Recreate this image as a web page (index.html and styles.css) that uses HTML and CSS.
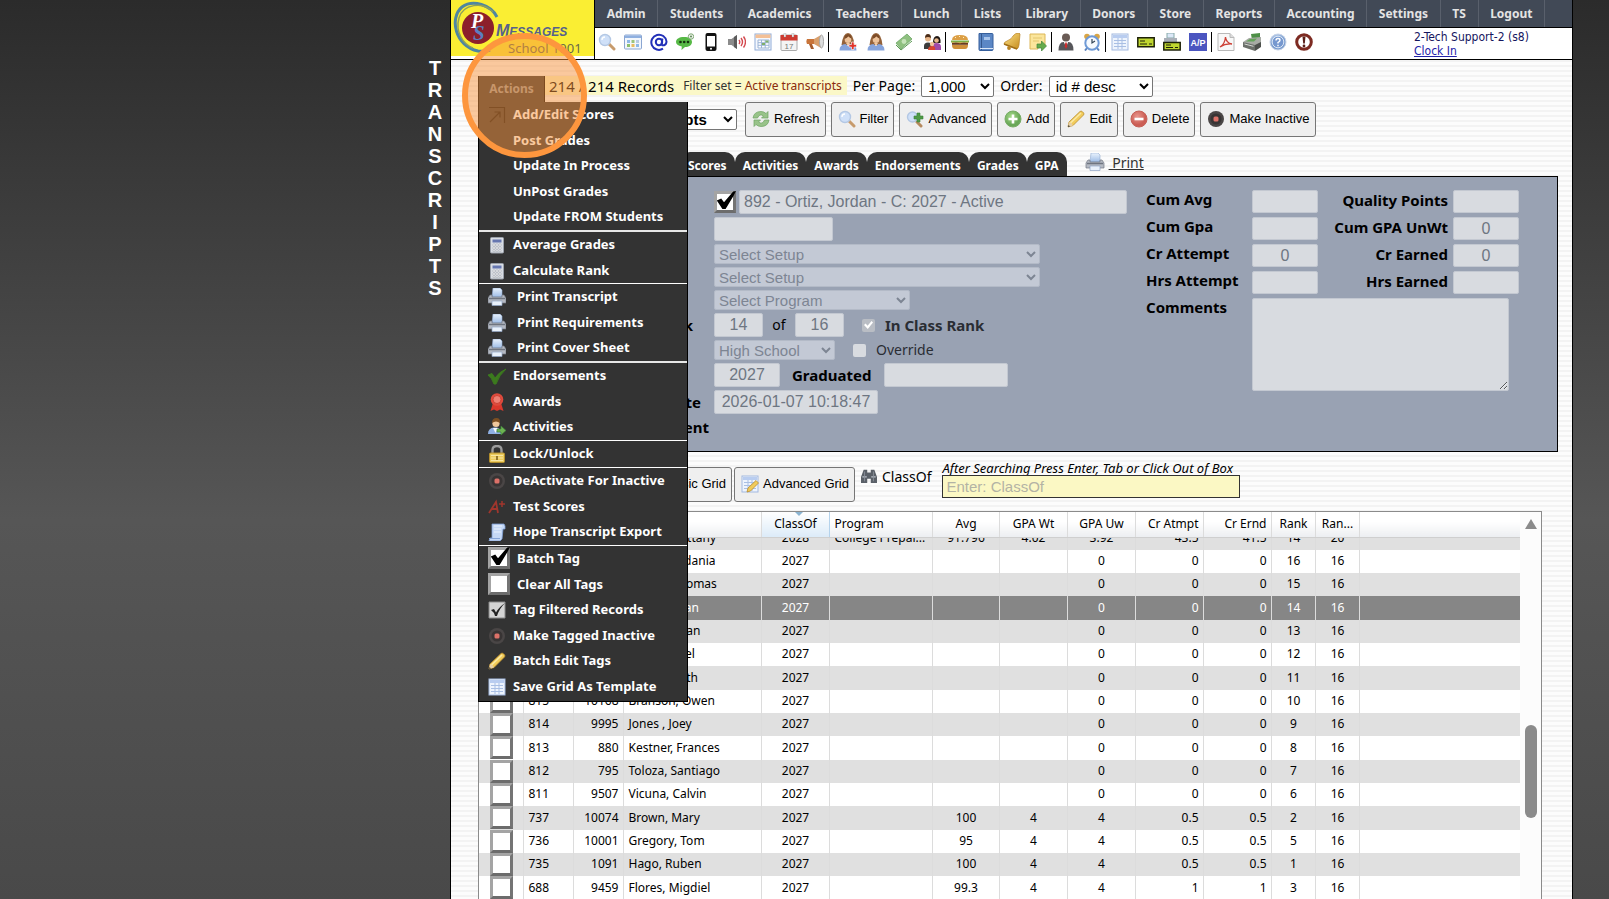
FILE: index.html
```html
<!DOCTYPE html>
<html lang="en">
<head>
<meta charset="utf-8">
<title>Transcripts</title>
<link rel="stylesheet" href="styles.css">
</head>
<body>
<svg class="sprite" aria-hidden="true">
  <defs>
    <linearGradient id="gBlue" x1="0" y1="0" x2="0" y2="1"><stop offset="0" stop-color="#eaf3fd"/><stop offset="1" stop-color="#9dbce6"/></linearGradient>
    <linearGradient id="gGold" x1="0" y1="0" x2="1" y2="1"><stop offset="0" stop-color="#ffe58a"/><stop offset="1" stop-color="#c48a1c"/></linearGradient>
    <radialGradient id="gRed" cx=".4" cy=".35"><stop offset="0" stop-color="#e9968d"/><stop offset="1" stop-color="#cb5d54"/></radialGradient>
    <radialGradient id="gGreen" cx=".4" cy=".35"><stop offset="0" stop-color="#a8dc8c"/><stop offset="1" stop-color="#6aa858"/></radialGradient>
    <radialGradient id="gHelp" cx=".4" cy=".3"><stop offset="0" stop-color="#c4d8f2"/><stop offset="1" stop-color="#7d9fd0"/></radialGradient>
    <symbol id="search" viewBox="0 0 18 18"><path d="M11 11l5 5" stroke="#c79b6c" stroke-width="3" stroke-linecap="round"/><circle cx="7" cy="7" r="5.5" fill="#cfe0f8" stroke="#b4c8e4" stroke-width="1.4"/><path d="M4 7a3 3 0 0 1 3-3" stroke="#fff" stroke-width="1.3" fill="none"/></symbol>
    <symbol id="searchplus" viewBox="0 0 18 18"><path d="M11 12l4 4" stroke="#b58a5f" stroke-width="3" stroke-linecap="round"/><circle cx="6.5" cy="7" r="5" fill="#cfe0f8" stroke="#b4c8e4" stroke-width="1.4"/><path d="M11 3h3v3h3v3h-3v3h-3V9H8V6h3z" fill="#4e9a45" stroke="#39803a" stroke-width=".6"/></symbol>
    <symbol id="table" viewBox="0 0 18 18"><rect x=".5" y="2" width="17" height="14" rx="1" fill="#f3f7fc" stroke="#8ba6d2"/><path d="M1 2.500h16v2.500H1z" fill="#8fb0e0"/><path d="M3 7h3v3H3zM12 11h3v3h-3z" fill="#8fb9e8"/><path d="M7.500 7h3v3h-3z" fill="#9cc47d"/><path d="M12 7h3v3h-3z" fill="#b8cbe4"/><path d="M3 11h3v3H3z" fill="#8cbf6d"/><path d="M7.500 11h3v3h-3z" fill="#e9bd5f"/></symbol>
    <symbol id="at" viewBox="0 0 18 18"><circle cx="9" cy="9" r="3.200" fill="none" stroke="#2230b8" stroke-width="2"/><path d="M12.400 5.500l-.8 5.500c0 2.500 4.900 1.500 4.900-2.500A7.600 7.600 0 1 0 13 15.700" fill="none" stroke="#2230b8" stroke-width="2"/></symbol>
    <symbol id="chat" viewBox="0 0 18 18"><path d="M8 4c5 0 8 2 8 5s-3 5-7 5l-3.500 3 .3-3.500C2 13 0 11 0 9c0-3 3-5 8-5z" fill="#57b946"/><circle cx="4.500" cy="9" r="1.300" fill="#15320f"/><circle cx="8.200" cy="9" r="1.300" fill="#15320f"/><circle cx="12" cy="9" r="1.300" fill="#15320f"/><circle cx="15" cy="3.500" r="2.700" fill="#eef3ec" stroke="#7da873"/><circle cx="15" cy="3.500" r="1" fill="#5b8753"/></symbol>
    <symbol id="phone" viewBox="0 0 18 18"><rect x="3.500" y="0" width="11" height="18" rx="2" fill="#111"/><rect x="5" y="3" width="8" height="10.500" fill="#fff"/><circle cx="9" cy="15.800" r="1" fill="#fff"/></symbol>
    <symbol id="sound" viewBox="0 0 18 18"><path d="M0 6h3.500L9 2v14l-5.500-4H0z" fill="#8b8b8b"/><path d="M6 4l3-2v14l-3-2z" fill="#5c5c5c"/><path d="M11 7q1.500 2 0 4M13 5q3 4 0 8M15.500 3.500q4 5.500 0 11" stroke="#d3494f" stroke-width="1.400" fill="none"/></symbol>
    <symbol id="sheet" viewBox="0 0 18 18"><rect x="1" y="1" width="16" height="16" fill="#f5f8fd" stroke="#8facd8"/><path d="M1.500 1.500h15V5h-15z" fill="#f4c096"/><path d="M4 7h11v8H4z" fill="#fff" stroke="#9cb4d6"/><path d="M4 9.700h11M4 12.300h11M7.500 7v8M11.200 7v8" stroke="#9cb4d6"/><path d="M8 10h3v2H8zM11.500 7.500h3v2h-3z" fill="#7fb069"/></symbol>
    <symbol id="calendar" viewBox="0 0 18 18"><rect x="1" y="2" width="16" height="15.500" rx="1" fill="#f4f4f4" stroke="#aaa"/><path d="M.5 2h17v5.500H.5z" fill="#cf3a30"/><path d="M4 0h1.800v4H4zM12 0h1.800v4H12z" fill="#fff" stroke="#888" stroke-width=".4"/><text x="9" y="15.500" font-size="8" font-family="Liberation Sans" text-anchor="middle" fill="#777">17</text></symbol>
    <symbol id="horn" viewBox="0 0 18 18"><path d="M1 6h7v5H1q-1.200-2.500 0-5z" fill="#c8743a"/><path d="M8 6l7-4v13l-7-4z" fill="#d9a06d"/><ellipse cx="15.500" cy="8.500" rx="2" ry="6.500" fill="#ddd" stroke="#a8a8a8"/><path d="M3 11h3l2 5H5z" fill="#a75c2c"/></symbol>
    <symbol id="woman" viewBox="0 0 18 18"><path d="M2.500 12Q4 0 9 0t6.500 12z" fill="#94623a"/><circle cx="9" cy="6.800" r="3.300" fill="#eec39a"/><path d="M5.500 6q3-1 4-3 1 2 3 2.500L12 2.500 9 1 6 2.500z" fill="#7d4c27"/><path d="M.5 17.500q0-6 6-6.500l2.500 2 2.500-2q6 .5 6 6.500z" fill="#86a4dc"/><path d="M7 10h4l-2 3z" fill="#f2c9a0"/></symbol>
    <symbol id="womanplus" viewBox="0 0 18 18"><use href="#woman"/><path d="M12.500 9h2.500v2.500h2.500V14H15v2.500h-2.500V14H10v-2.500h2.500z" fill="#e0342b" stroke="#fff" stroke-width=".6"/></symbol>
    <symbol id="cash" viewBox="0 0 18 18"><path d="M1 10L12 1l5 5L6 16z" fill="#8fc080" stroke="#62a05b" stroke-width=".7"/><path d="M1 12l5 5 11-9" fill="none" stroke="#5b9953"/><circle cx="9" cy="8.500" r="2.400" fill="#c6e3ba"/></symbol>
    <symbol id="people" viewBox="0 0 18 18"><path d="M1 13q0-3.500 4-3.500t4 3.500v3H1z" fill="#3c3c3c"/><path d="M9 14q0-4 4.500-4t4.500 4v3H9z" fill="#a04aa8"/><circle cx="5" cy="5.500" r="3" fill="#e7b68a"/><path d="M2 5q0-4 3-4t3 4q-3-2-6 0z" fill="#4b2d17"/><path d="M10 10q0-7 4-7t3.500 7z" fill="#1f1713"/><circle cx="13.500" cy="7.500" r="2.300" fill="#e7b68a"/><path d="M5 17q0-4 4-4t3 4z" fill="#d9452f"/><circle cx="9" cy="11" r="2.200" fill="#f0c69d"/></symbol>
    <symbol id="burger" viewBox="0 0 18 18"><path d="M1 7q0-5 8-5t8 5z" fill="#dc9f45"/><path d="M0 7.500h18v2H0z" fill="#7cae45"/><path d="M1 9.500h16v2.300H1z" fill="#6b3a1c"/><path d="M1 8.800l8 1.500 8-1.500v.8H1z" fill="#f4cf4b"/><path d="M1 12h16q0 4-3 4H4q-3 0-3-4z" fill="#cf8f39"/><path d="M4 4.500h1M8 3.500h1M12 4.500h1" stroke="#fff0c4"/></symbol>
    <symbol id="book" viewBox="0 0 18 18"><path d="M2 .5h13q1 0 1 1v15q0 1-1 1H3q-1 0-1-1z" fill="#5b87c5" stroke="#365f9c"/><path d="M4.500 1v16" stroke="#34588e"/><path d="M7 4h6v3H7z" fill="#a8c5ec"/><path d="M3 15.500h13" stroke="#dbe7f7"/></symbol>
    <symbol id="bell" viewBox="0 0 18 18"><path d="M16 0l1 1-1 11q-.5 3-2 4L1 11q0-2 3-3 5-2 6-5 2-3 6-3z" fill="url(#gGold)" stroke="#b8801f" stroke-width=".7"/><path d="M1 11l13 5" stroke="#a26f17" stroke-width="1.500"/><circle cx="6" cy="15" r="1.900" fill="#b98322"/></symbol>
    <symbol id="noteout" viewBox="0 0 18 18"><path d="M1 1h15v11H9v4H1z" fill="#fbe59b" stroke="#dcb758"/><path d="M4 5h9M4 8h6" stroke="#e3c66e"/><path d="M8 11h4.500V8l5 5-5 5v-3H8z" fill="#66ab4c" stroke="#40843a" stroke-width=".7"/></symbol>
    <symbol id="suit" viewBox="0 0 18 18"><circle cx="9" cy="4.500" r="4" fill="#6a5b55"/><path d="M1.500 17.500q0-8.500 5-8.500h5q5 0 5 8.500z" fill="#56565a"/><path d="M6.800 9h4.400L9 14z" fill="#fff"/><path d="M8.300 9.500h1.400l.6 4L9 16l-1.300-2.500z" fill="#cc2d2d"/></symbol>
    <symbol id="alarm" viewBox="0 0 18 18"><circle cx="4" cy="3.500" r="2.800" fill="#d9a545"/><circle cx="14" cy="3.500" r="2.800" fill="#d9a545"/><path d="M4 15l-2 2.500M14 15l2 2.500" stroke="#5b82bd" stroke-width="2"/><circle cx="9" cy="10" r="6.700" fill="#f6fafe" stroke="#6f9ad6" stroke-width="2"/><path d="M9 6v4l3-2" stroke="#345" fill="none" stroke-width="1.200"/></symbol>
    <symbol id="grid" viewBox="0 0 18 18"><rect x="1" y="1" width="16" height="16" fill="#eef4fd" stroke="#a3b9e0"/><path d="M2 2h14v3H2z" fill="#b9cdf0"/><path d="M3 7.500h12M3 10.500h12M3 13.500h12M7 5v11M11 5v11" stroke="#a9bfe4"/></symbol>
    <symbol id="check" viewBox="0 0 18 18"><path d="M.8 4.800h16.400v9H.8z" fill="#bfd630" stroke="#1d2108" stroke-width="1.500"/><path d="M3 8h5M3 11h7M12 11h3" stroke="#1d2108"/></symbol>
    <symbol id="printcheck" viewBox="0 0 18 18"><path d="M4 0h7v5H4z" fill="#dce8f8" stroke="#8aa"/><path d="M1 5h13v5H1z" fill="#a9afb8"/><path d="M.8 9.500h16.400v7.500H.8z" fill="#bfd630" stroke="#1d2108" stroke-width="1.500"/><path d="M3 12h5M3 14.500h7M12 14.500h3" stroke="#1d2108"/></symbol>
    <symbol id="ap" viewBox="0 0 18 18"><path d="M0 0h18v18H0z" fill="#4b55c0"/><text x="9" y="12.500" font-size="9" font-weight="bold" font-family="Liberation Sans" text-anchor="middle" fill="#fff">A/P</text></symbol>
    <symbol id="pdf" viewBox="0 0 18 18"><path d="M1 .5h12l4 4v13H1z" fill="#f8f8f8" stroke="#b9b9b9"/><path d="M13 .5v4h4" fill="#ddd" stroke="#b9b9b9"/><path d="M3 14q5-3 5.500-10 .5 6 6.500 7-7-.5-12 3z" fill="none" stroke="#cc4036" stroke-width="1.300"/></symbol>
    <symbol id="register" viewBox="0 0 18 18"><path d="M8 1l9-1v5l-8 2z" fill="#4d8f47"/><path d="M0 9l6-4 12-1v7l-6 3z" fill="#a7aba4"/><path d="M3 8.500l4-2.500 7-.5-3 3z" fill="#64a35a"/><path d="M0 9l12 3v6L0 14z" fill="#6c706b"/><path d="M12 12l6-3v5l-6 4z" fill="#4d504c"/><path d="M1.500 11l9 2.300" stroke="#d5d8d3"/></symbol>
    <symbol id="help" viewBox="0 0 18 18"><circle cx="9" cy="9" r="8" fill="url(#gHelp)" stroke="#c8d4e8"/><circle cx="9" cy="9" r="5.800" fill="#7698cf" stroke="#dbe6f5"/><path d="M7 7.500q0-2 2-2t2 1.700q0 1-2 2.300v1M9 11.800v1.500" stroke="#fff" stroke-width="1.400" fill="none"/></symbol>
    <symbol id="alert" viewBox="0 0 18 18"><circle cx="9" cy="9" r="7.300" fill="#fff" stroke="#7d2b22" stroke-width="3"/><path d="M7.500 3.500h3L9.800 10.500H8.200z" fill="#5b2019"/><circle cx="9" cy="13" r="1.400" fill="#5b2019"/></symbol>
    <symbol id="refresh" viewBox="0 0 18 18"><path d="M1 8q1-6.500 8-6.500 3 0 5 2l2-2v6.500h-6.500l2-2q-4-3-6 2z" fill="#98c389" stroke="#6da362" stroke-width=".7"/><path d="M17 10q-1 6.500-8 6.500-3 0-5-2l-2 2V10h6.500l-2 2q4 3 6-2z" fill="#98c389" stroke="#6da362" stroke-width=".7"/></symbol>
    <symbol id="add" viewBox="0 0 18 18"><circle cx="9" cy="9" r="8" fill="url(#gGreen)" stroke="#78ac66"/><path d="M7.700 4.500h2.600v3.200h3.200v2.600h-3.200v3.200H7.700v-3.200H4.500V7.700h3.200z" fill="#fff"/></symbol>
    <symbol id="delete" viewBox="0 0 18 18"><circle cx="9" cy="9" r="8" fill="url(#gRed)" stroke="#c66057"/><path d="M4.500 7.700h9v2.600h-9z" fill="#fff"/></symbol>
    <symbol id="pencil" viewBox="0 0 18 18"><path d="M1 17l1-5L13 1.500q1-1 2.500.3l1 1q1 1.200 0 2.200L6 15.500z" fill="#f1cb5a" stroke="#b98d2d" stroke-width=".8"/><path d="M3.500 13L14 3" stroke="#fae9a5" stroke-width="1.600"/><path d="M1 17l1-5q3 .5 4 3.500z" fill="#e6cfa7"/><path d="M1 17l.5-2 1.500 1.500z" fill="#333"/></symbol>
    <symbol id="dot" viewBox="0 0 18 18"><circle cx="9" cy="9" r="8" fill="#4a4646"/><circle cx="9" cy="9" r="5.500" fill="#383434"/><rect x="6.500" y="6.500" width="5" height="5" rx="1.500" fill="#dc7168"/></symbol>
    <symbol id="printer" viewBox="0 0 18 18"><path d="M5 0h7l2 2v7H4z" fill="url(#gBlue)" stroke="#92abd2" stroke-width=".6"/><path d="M2 7h2v2h10V7h2l2 3v5H0v-5z" fill="#b4b9c2" stroke="#737984" stroke-width=".7"/><path d="M1 10.500h16" stroke="#6f7580" stroke-width="1.500"/><path d="M4 13h10v4.500H4z" fill="#e9f1fb" stroke="#8fa3c4" stroke-width=".7"/></symbol>
    <symbol id="calc" viewBox="0 0 18 18"><rect x="2.500" y="1.500" width="13" height="15.500" rx="1" fill="#d9dde3" stroke="#9aa0aa"/><path d="M4.500 3.500h9v3h-9z" fill="#6677b0"/><path d="M5 8h2v2H5zM8 8h2v2H8zM11 8h2v2h-2zM5 11h2v2H5zM8 11h2v2H8zM11 11h2v2h-2zM5 14h2v1.500H5zM8 14h2v1.500H8zM11 14h2v1.500h-2z" fill="#fff" stroke="#8a909b" stroke-width=".4"/></symbol>
    <symbol id="arrow" viewBox="0 0 18 18"><path d="M1 1.500h15.500V17M2 16L12 6M6.500 6H12v5.500" fill="none" stroke="#0c0c0c" stroke-width="1.200"/></symbol>
    <symbol id="tick" viewBox="0 0 18 18"><path d="M0 8l4-1.500L7 11q4-6 11-9Q11 8 8 17H6Q4 11 0 8z" fill="#3c7a1e" stroke="#3c7a1e"/></symbol>
    <symbol id="award" viewBox="0 0 18 18"><path d="M5 10L2.500 18 6 16.500 9 18l3-1.500 3.500 1.500L13 10z" fill="#d9382c"/><circle cx="9" cy="6.500" r="6.300" fill="#e04a3c"/><circle cx="9" cy="6.500" r="4" fill="#ee8074" stroke="#c5382c" stroke-width=".8"/></symbol>
    <symbol id="person" viewBox="0 0 18 18"><path d="M0 16q0-6 6-6.500h3q4 1 4 6.500z" fill="#8fb0e4"/><path d="M5 10l2.500 5L10 10z" fill="#f4f7fb"/><circle cx="8" cy="5.500" r="3.600" fill="#efc79c"/><path d="M4 5q0-5 4.500-5 4 0 3.500 5-4-3-8 0z" fill="#7c4f22"/><path d="M9 11h4V8l5 4.500-5 4.500v-3H9z" fill="#6cb352" stroke="#3f833a" stroke-width=".7"/></symbol>
    <symbol id="lock" viewBox="0 0 18 18"><path d="M4.500 9V5q0-4 4.500-4t4.500 4v4" fill="none" stroke="#9b9b9b" stroke-width="2.400"/><rect x="1.500" y="8" width="15" height="9.500" rx="1" fill="#eccb5c" stroke="#b28d2c"/><path d="M3 10.500h12M3 13h12M3 15.500h12" stroke="#f8e6a4"/><path d="M8.200 11h1.600v4H8.200z" fill="#7c601a"/></symbol>
    <symbol id="grade" viewBox="0 0 18 18"><path d="M1 15L8 4l2 11M4 11h6" fill="none" stroke="#a0362d" stroke-width="1.800"/><path d="M14 3v6M11 6h6" stroke="#a0362d" stroke-width="1.500"/></symbol>
    <symbol id="scroll" viewBox="0 0 18 18"><path d="M4 1h12l1 2v3h-2l-1 10-2 2H1l1-3h2z" fill="#c5d8f5" stroke="#7f9fd4" stroke-width=".8"/><path d="M6 3h8M6 6h7M6 9h7" stroke="#eaf2fd"/><path d="M1 15.500h11" stroke="#86a5d8"/></symbol>
    <symbol id="graytick" viewBox="0 0 18 18"><path d="M1 1h16v16H1z" fill="#d4d4d4" stroke="#8b8b8b"/><path d="M3 9l3-1 2 3.500Q11 6 17 2q-6 6-8 13H7Q6 11 3 9z" fill="#222"/></symbol>
    <symbol id="gridedit" viewBox="0 0 18 18"><use href="#grid"/><path d="M6 17l1-4 8-7.500 2.500 2.500L9.500 16z" fill="#f1cb5a" stroke="#b98d2d" stroke-width=".8"/></symbol>
    <symbol id="binoculars" viewBox="0 0 18 18"><path d="M3 2h4v3h4V2h4l3 8v7h-7v-5H7v5H0v-7z" fill="#5a6068"/><path d="M1.500 10h5M11.500 10h5" stroke="#b9bfc8" stroke-width="1.500"/><path d="M4 4v11M14 4v11" stroke="#8b929c"/></symbol>
  </defs>
</svg>

<div class="page">
  <aside class="rail" aria-label="Transcripts">
    <span>T</span><span>R</span><span>A</span><span>N</span><span>S</span><span>C</span><span>R</span><span>I</span><span>P</span><span>T</span><span>S</span>
  </aside>

  <main class="app">
    <header class="top">
      <svg class="logo" viewBox="0 0 143 56">
        <path d="M46 17C40 5 22-1 11 7-2 18 4 46 27 51q7 1 12-1" fill="none" stroke="#4f86a0" stroke-width="3"/>
        <path d="M42 12C32 1 12 4 8 18 4 32 12 44 22 48" fill="none" stroke="#8fa05a" stroke-width="1.500"/>
        <circle cx="27" cy="28" r="16" fill="#8c1f2b"/>
        <text x="20" y="28" class="logo-p">P</text>
        <text x="22" y="40" class="logo-s">S</text>
        <text x="45" y="36" class="logo-name">M<tspan class="logo-rest">ESSAGES</tspan></text>
        <text x="57" y="53" class="logo-school">School 1001</text>
      </svg>
      <div class="bars">
        <nav class="nav">
          <a href="#">Admin</a><a href="#">Students</a><a href="#">Academics</a><a href="#">Teachers</a><a href="#">Lunch</a><a href="#">Lists</a><a href="#">Library</a><a href="#">Donors</a><a href="#">Store</a><a href="#">Reports</a><a href="#">Accounting</a><a href="#">Settings</a><a href="#">TS</a><a href="#">Logout</a>
        </nav>
        <div class="tools">
          <div class="set"><svg><use href="#search"/></svg><svg><use href="#table"/></svg><svg><use href="#at"/></svg><svg><use href="#chat"/></svg><svg><use href="#phone"/></svg><svg><use href="#sound"/></svg><svg><use href="#sheet"/></svg><svg><use href="#calendar"/></svg><svg><use href="#horn"/></svg></div>
          <div class="set wide"><svg><use href="#womanplus"/></svg><svg><use href="#woman"/></svg><svg><use href="#cash"/></svg><svg><use href="#people"/></svg></div>
          <div class="set"><svg><use href="#burger"/></svg><svg><use href="#book"/></svg><svg><use href="#bell"/></svg><svg><use href="#noteout"/></svg></div>
          <div class="set"><svg><use href="#suit"/></svg><svg><use href="#alarm"/></svg></div>
          <div class="set"><svg><use href="#grid"/></svg><svg><use href="#check"/></svg><svg><use href="#printcheck"/></svg><svg><use href="#ap"/></svg></div>
          <div class="set"><svg><use href="#pdf"/></svg><svg><use href="#register"/></svg><svg><use href="#help"/></svg><svg><use href="#alert"/></svg></div>
          <div class="user">2-Tech Support-2 (s8)<br><a href="#">Clock In</a></div>
        </div>
      </div>
    </header>

    <div class="content">
      <div class="summary">
        <div class="actions">
          <button class="actions-btn" type="button">Actions</button>
          <div class="menu">
            <ul>
              <li><svg><use href="#arrow"/></svg>Add/Edit Scores</li>
              <li class="plain">Post Grades</li>
              <li class="plain">Update In Process</li>
              <li class="plain">UnPost Grades</li>
              <li class="plain">Update FROM Students</li>
            </ul>
            <ul class="thick">
              <li><svg><use href="#calc"/></svg>Average Grades</li>
              <li><svg><use href="#calc"/></svg>Calculate Rank</li>
            </ul>
            <ul>
              <li class="roomy"><svg><use href="#printer"/></svg>Print Transcript</li>
              <li class="roomy"><svg><use href="#printer"/></svg>Print Requirements</li>
              <li class="roomy"><svg><use href="#printer"/></svg>Print Cover Sheet</li>
            </ul>
            <ul class="thick">
              <li><svg><use href="#tick"/></svg>Endorsements</li>
              <li><svg><use href="#award"/></svg>Awards</li>
              <li><svg><use href="#person"/></svg>Activities</li>
            </ul>
            <ul><li><svg><use href="#lock"/></svg>Lock/Unlock</li></ul>
            <ul>
              <li><svg><use href="#dot"/></svg>DeActivate For Inactive</li>
              <li><svg><use href="#grade"/></svg>Test Scores</li>
              <li><svg><use href="#scroll"/></svg>Hope Transcript Export</li>
            </ul>
            <ul>
              <li><label><input class="tag" type="checkbox" checked>Batch Tag</label></li>
              <li><label><input class="tag" type="checkbox">Clear All Tags</label></li>
              <li><svg><use href="#graytick"/></svg>Tag Filtered Records</li>
              <li><svg><use href="#dot"/></svg>Make Tagged Inactive</li>
              <li><svg><use href="#pencil"/></svg>Batch Edit Tags</li>
              <li><svg><use href="#grid"/></svg>Save Grid As Template</li>
            </ul>
          </div>
          <div class="spot"></div>
        </div>
        <div class="records"><span>214 / 214 Records</span><span class="filter">Filter set = <em>Active transcripts</em></span></div>
        <label for="perpage">Per Page:</label>
        <select id="perpage" class="sel perpage"><option>1,000</option></select>
        <label for="order">Order:</label>
        <select id="order" class="sel order"><option>id # desc</option></select>
      </div>

      <div class="commands">
        <select class="sel view" aria-label="View"><option>Transcripts</option></select>
        <button class="btn" type="button"><svg><use href="#refresh"/></svg>Refresh</button>
        <button class="btn" type="button"><svg><use href="#search"/></svg>Filter</button>
        <button class="btn" type="button"><svg><use href="#searchplus"/></svg>Advanced</button>
        <button class="btn" type="button"><svg><use href="#add"/></svg>Add</button>
        <button class="btn" type="button"><svg><use href="#pencil"/></svg>Edit</button>
        <button class="btn" type="button"><svg><use href="#delete"/></svg>Delete</button>
        <button class="btn" type="button"><svg><use href="#dot"/></svg>Make Inactive</button>
      </div>

      <div class="tabs">
        <button type="button">Scores</button><button type="button">Activities</button><button type="button">Awards</button><button type="button">Endorsements</button><button type="button">Grades</button><button type="button">GPA</button>
        <a class="print" href="#"><svg><use href="#printer"/></svg><span>&nbsp;Print</span></a>
      </div>

      <section class="panel">
        <div class="fields">
          <div class="line"><span class="cap"></span><input class="tag" type="checkbox" checked aria-label="Tagged"><input class="box grow" disabled value="892 - Ortiz, Jordan - C: 2027 - Active" aria-label="Student"></div>
          <div class="line"><span class="cap"></span><input class="box w-code" disabled aria-label="Code"></div>
          <div class="line"><span class="cap"></span><select class="pick w-setup" disabled aria-label="Setup"><option>Select Setup</option></select></div>
          <div class="line"><span class="cap"></span><select class="pick w-setup" disabled aria-label="Second setup"><option>Select Setup</option></select></div>
          <div class="line"><span class="cap"></span><select class="pick w-program" disabled aria-label="Program"><option>Select Program</option></select></div>
          <div class="line"><label class="cap in-far" for="rank">Rank</label><input id="rank" class="box num w-rank" disabled value="14"><span class="of">of</span><input class="box num w-rank" disabled value="16" aria-label="Class size"><label class="tickline"><input class="mini" type="checkbox" checked disabled><b>In Class Rank</b></label></div>
          <div class="line"><span class="cap"></span><select class="pick w-level" disabled aria-label="Level"><option>High School</option></select><label class="tickline"><input class="mini" type="checkbox" disabled>Override</label></div>
          <div class="line"><span class="cap"></span><input class="box num w-year" disabled value="2027" aria-label="Class of"><label class="grad" for="grad">Graduated</label><input id="grad" class="box w-grad" disabled></div>
          <div class="line"><label class="cap in-near" for="upd">Update</label><input id="upd" class="box num w-date" disabled value="2026-01-07 10:18:47"></div>
          <div class="line"><span class="cap">Enrollment</span></div>
        </div>
        <div class="totals">
          <label for="avg">Cum Avg</label><input id="avg" class="box num" disabled>
          <label class="end" for="qp">Quality Points</label><input id="qp" class="box num" disabled>
          <label for="gpa">Cum Gpa</label><input id="gpa" class="box num" disabled>
          <label class="end" for="gpau">Cum GPA UnWt</label><input id="gpau" class="box num" disabled value="0">
          <label for="cra">Cr Attempt</label><input id="cra" class="box num" disabled value="0">
          <label class="end" for="cre">Cr Earned</label><input id="cre" class="box num" disabled value="0">
          <label for="hra">Hrs Attempt</label><input id="hra" class="box num" disabled>
          <label class="end" for="hre">Hrs Earned</label><input id="hre" class="box num" disabled>
          <label for="com">Comments</label><textarea id="com" class="box area" disabled></textarea>
        </div>
      </section>

      <div class="gridbar">
        <button class="btn basic" type="button">Basic Grid</button>
        <button class="btn" type="button"><svg><use href="#gridedit"/></svg>Advanced Grid</button>
        <div class="by"><svg><use href="#binoculars"/></svg>ClassOf</div>
        <div class="find"><label for="find">After Searching Press Enter, Tab or Click Out of Box</label><input id="find" placeholder="Enter: ClassOf"></div>
      </div>

      <div class="grid">
        <div class="sheet">
          <table class="data head">
            <colgroup><col class="c-tag"><col class="c-id"><col class="c-id"><col class="c-name"><col class="c-class"><col class="c-prog"><col class="c-avg"><col class="c-gpa"><col class="c-gpa"><col class="c-gpa"><col class="c-gpa"><col class="c-rank"><col class="c-rank"><col></colgroup>
            <thead><tr><th></th><th></th><th></th><th></th><th class="sorted">ClassOf</th><th>Program</th><th>Avg</th><th>GPA Wt</th><th>GPA Uw</th><th>Cr Atmpt</th><th>Cr Ernd</th><th>Rank</th><th>Ran...</th><th></th></tr></thead>
          </table>
          <div class="view-port">
            <table class="data rows">
              <colgroup><col class="c-tag"><col class="c-id"><col class="c-id"><col class="c-name"><col class="c-class"><col class="c-prog"><col class="c-avg"><col class="c-gpa"><col class="c-gpa"><col class="c-gpa"><col class="c-gpa"><col class="c-rank"><col class="c-rank"><col></colgroup>
              <tbody>
                <tr><td></td><td></td><td></td><td>Brown, Brittany</td><td>2028</td><td>College Prepar...</td><td>91.796</td><td>4.02</td><td>3.92</td><td>43.5</td><td>41.5</td><td>14</td><td>20</td><td></td></tr>
                <tr><td></td><td></td><td></td><td>Morales, Idania</td><td>2027</td><td></td><td></td><td></td><td>0</td><td>0</td><td>0</td><td>16</td><td>16</td><td></td></tr>
                <tr><td></td><td></td><td></td><td>Walker, Thomas</td><td>2027</td><td></td><td></td><td></td><td>0</td><td>0</td><td>0</td><td>15</td><td>16</td><td></td></tr>
                <tr class="on"><td></td><td></td><td></td><td>Ortiz, Jordan</td><td>2027</td><td></td><td></td><td></td><td>0</td><td>0</td><td>0</td><td>14</td><td>16</td><td></td></tr>
                <tr><td></td><td></td><td></td><td>Smith, Bryan</td><td>2027</td><td></td><td></td><td></td><td>0</td><td>0</td><td>0</td><td>13</td><td>16</td><td></td></tr>
                <tr><td></td><td></td><td></td><td>Diaz, Daniel</td><td>2027</td><td></td><td></td><td></td><td>0</td><td>0</td><td>0</td><td>12</td><td>16</td><td></td></tr>
                <tr><td></td><td></td><td></td><td>Payne, Edith</td><td>2027</td><td></td><td></td><td></td><td>0</td><td>0</td><td>0</td><td>11</td><td>16</td><td></td></tr>
                <tr><td><input class="tag" type="checkbox" aria-label="Tag 815"></td><td>815</td><td>10168</td><td>Branson, Owen</td><td>2027</td><td></td><td></td><td></td><td>0</td><td>0</td><td>0</td><td>10</td><td>16</td><td></td></tr>
                <tr><td><input class="tag" type="checkbox" aria-label="Tag 814"></td><td>814</td><td>9995</td><td>Jones , Joey</td><td>2027</td><td></td><td></td><td></td><td>0</td><td>0</td><td>0</td><td>9</td><td>16</td><td></td></tr>
                <tr><td><input class="tag" type="checkbox" aria-label="Tag 813"></td><td>813</td><td>880</td><td>Kestner, Frances</td><td>2027</td><td></td><td></td><td></td><td>0</td><td>0</td><td>0</td><td>8</td><td>16</td><td></td></tr>
                <tr><td><input class="tag" type="checkbox" aria-label="Tag 812"></td><td>812</td><td>795</td><td>Toloza, Santiago</td><td>2027</td><td></td><td></td><td></td><td>0</td><td>0</td><td>0</td><td>7</td><td>16</td><td></td></tr>
                <tr><td><input class="tag" type="checkbox" aria-label="Tag 811"></td><td>811</td><td>9507</td><td>Vicuna, Calvin</td><td>2027</td><td></td><td></td><td></td><td>0</td><td>0</td><td>0</td><td>6</td><td>16</td><td></td></tr>
                <tr><td><input class="tag" type="checkbox" aria-label="Tag 737"></td><td>737</td><td>10074</td><td>Brown, Mary</td><td>2027</td><td></td><td>100</td><td>4</td><td>4</td><td>0.5</td><td>0.5</td><td>2</td><td>16</td><td></td></tr>
                <tr><td><input class="tag" type="checkbox" aria-label="Tag 736"></td><td>736</td><td>10001</td><td>Gregory, Tom</td><td>2027</td><td></td><td>95</td><td>4</td><td>4</td><td>0.5</td><td>0.5</td><td>5</td><td>16</td><td></td></tr>
                <tr><td><input class="tag" type="checkbox" aria-label="Tag 735"></td><td>735</td><td>1091</td><td>Hago, Ruben</td><td>2027</td><td></td><td>100</td><td>4</td><td>4</td><td>0.5</td><td>0.5</td><td>1</td><td>16</td><td></td></tr>
                <tr><td><input class="tag" type="checkbox" aria-label="Tag 688"></td><td>688</td><td>9459</td><td>Flores, Migdiel</td><td>2027</td><td></td><td>99.3</td><td>4</td><td>4</td><td>1</td><td>1</td><td>3</td><td>16</td><td></td></tr>
              </tbody>
            </table>
          </div>
        </div>
        <div class="scroll"><div class="up"></div><div class="thumb"></div></div>
      </div>
    </div>
  </main>
</div>
</body>
</html>
```
FILE: styles.css
```css
* { box-sizing: border-box; }

body {
  margin: 0;
  font-family: "Noto Sans", "DejaVu Sans Condensed", sans-serif;
  font-size: 12px;
  color: #000;
  background: linear-gradient(#2b2b2b, #565656 520px, #494949 900px);
}

button, input, select, textarea { font-family: "Liberation Sans", Arial, sans-serif; margin: 0; }
.sprite { position: absolute; width: 0; height: 0; }

.page { display: flex; height: 100vh; overflow: hidden; padding-right: 36px; }

.rail {
  flex: 0 0 450px;
  display: flex;
  flex-direction: column;
  align-items: flex-end;
  padding: 57px 4px 0 0;
  font: bold 20px/22px "Liberation Sans", Arial, sans-serif;
  color: #fff;
}
.rail span { width: 22px; text-align: center; }

.app {
  flex: 1;
  min-width: 0;
  display: flex;
  flex-direction: column;
  border: solid #000;
  border-width: 0 1px;
  background: repeating-linear-gradient(#f3f3f3 0 2px, #fcfcfc 2px 5px);
}

/* header */
.top { display: flex; height: 60px; border-bottom: 1px solid #000; background: #fff; }
.logo { flex: none; width: 143px; height: 56px; background: #faee33; }
.logo text { font-family: "Liberation Sans", Arial, sans-serif; }
.logo .logo-p { font: italic bold 20px "Liberation Serif", serif; fill: #fff; }
.logo .logo-s { font: italic bold 21px "Liberation Serif", serif; fill: #5b7fc0; }
.logo .logo-name { font-size: 16px; font-weight: bold; font-style: italic; fill: #56618c; }
.logo-rest { font-size: 12px; }
.logo .logo-school { font: 13px "Noto Sans", sans-serif; fill: #6b6a4a; }
.bars { flex: 1; display: flex; flex-direction: column; border-left: 1px solid #000; }
.nav { display: flex; height: 28px; padding-right: 27px; background: #414956; border-bottom: 1px solid #000; }
.nav a {
  flex: 1 1 auto;
  padding: 0 10px;
  border-right: 1px solid #59606c;
  font-weight: bold;
  line-height: 27px;
  text-align: center;
  color: #e4e4e4;
  text-decoration: none;
}
.tools { display: flex; align-items: flex-start; padding: 4px 0 0 3px; }
.set { display: flex; align-items: center; gap: 8px; height: 20px; padding-right: 4px; }
.set + .set { border-left: 1px solid #000; padding-left: 5px; }
.set + .set.wide { gap: 10px; padding-left: 10px; }
.set svg { width: 18px; height: 18px; }
.user { margin: -2px 0 0 97px; font-family: "DejaVu Sans Condensed", sans-serif; line-height: 14px; color: #15155e; }
.user a { color: #2222a8; }

/* body of the page */
.content { flex: 1; min-height: 0; display: flex; flex-direction: column; padding: 16px 14px 0 27px; }

.summary { display: flex; align-items: flex-start; height: 26px; font-size: 14px; line-height: 20px; }
.actions { position: relative; }
.actions-btn {
  width: 67px;
  height: 26px;
  padding: 0 0 2px;
  border: solid #000;
  border-width: 0 1px;
  background: #333;
  color: #999;
  font: bold 12px "Noto Sans", sans-serif;
}
.menu {
  position: absolute;
  z-index: 2;
  top: 26px;
  left: 0;
  width: 210px;
  padding-bottom: 2px;
  border: 1px solid #000;
  border-top: 0;
  background: #333;
  color: #fff;
  font-size: 13px;
  font-weight: bold;
}
.menu ul { margin: 0; padding: 0; list-style: none; }
.menu ul + ul { border-top: 1px solid #fff; }
.menu ul.thick { border-top: 2px solid #e8e8e8; }
.menu li, .menu label { display: flex; align-items: center; gap: 7px; }
.menu li { height: 26px; padding: 0 0 2px 9px; white-space: nowrap; }
.menu li:nth-child(even) { height: 25px; }
.menu li.plain { padding-left: 34px; }
.menu li.roomy { gap: 11px; }
.menu svg { width: 18px; height: 18px; margin-top: 2px; }
.spot {
  position: absolute;
  z-index: 3;
  top: -43px;
  left: -16px;
  width: 125px;
  height: 125px;
  border: 6px solid #fd963e;
  border-radius: 50%;
  background: rgba(248, 147, 62, .5);
}

.records { display: flex; height: 19px; padding: 0 3px 0 4px; background: #fbf8c8; font-size: 15px; line-height: 20px; }
.filter { padding: 0 2px 0 9px; font-size: 12px; color: #333; }
.filter em { font-style: normal; color: #8a2a0c; }
.summary > label { padding: 0 6px; }
.sel { height: 21px; padding: 0 2px; border: 1px solid #767676; border-radius: 2px; background-color: #fff; font-size: 15px; color: #000; }
.perpage { width: 73px; }
.order { width: 104px; }

.commands { display: flex; align-items: center; gap: 5px; padding-left: 141px; }
.view { width: 118px; margin-right: 3px; font-weight: bold; }
.btn {
  display: flex;
  align-items: center;
  gap: 4px;
  height: 35px;
  padding: 0 5px 2px 6px;
  border: 1px solid #767676;
  border-radius: 3px;
  background: #efefef;
  font-size: 13px;
  color: #000;
}
.btn svg { width: 18px; height: 18px; }

.tabs { display: flex; height: 24px; margin-top: 15px; padding-left: 202px; }
.tabs button {
  padding: 2px 8px 0;
  border: 0;
  border-radius: 10px 10px 0 0;
  background: #333;
  color: #fff;
  font: bold 12px "Noto Sans", sans-serif;
}
.print { display: flex; align-items: center; gap: 4px; height: 20px; margin-left: 18px; font-size: 14px; color: #333; }
.print svg { width: 20px; height: 18px; }

/* record panel */
.panel { display: flex; gap: 19px; height: 276px; padding-top: 13px; border: 1px solid #000; background: #99a2b3; font-size: 15px; line-height: 20px; }
.fields { flex: 0 0 648px; display: flex; flex-direction: column; gap: 3px; }
.line { display: flex; align-items: center; }
.cap { width: 230px; margin-right: 5px; text-align: right; font-weight: bold; }
.cap.in-far { padding-right: 16px; }
.cap.in-near { padding-right: 8px; }
.box { height: 24px; padding: 0 4px; border: 1px solid #c3c8d1; border-radius: 2px; background: #d8dbe0; font-size: 16px; color: #6e7682; }
.pick { height: 20px; padding: 0; border: 1px solid #b3bac7; border-radius: 2px; background-color: #c3c9d5; font-size: 15px; color: #7d8593; opacity: 1; }
.num { text-align: center; }
.grow { flex: 1; margin-left: 3px; }
.w-code { width: 119px; }
.w-setup { width: 326px; }
.w-program { width: 196px; }
.w-rank { width: 49px; }
.w-level { width: 121px; }
.w-year { width: 66px; }
.w-grad { width: 124px; }
.w-date { width: 164px; }
.of { width: 32px; text-align: center; font-size: 14px; }
.tickline { display: flex; align-items: center; gap: 10px; padding-left: 18px; font-size: 14px; color: #2a2d33; }
.tickline b { font-size: 15px; }
.grad { padding: 0 13px 0 12px; font-weight: bold; }
.mini { appearance: none; position: relative; width: 13px; height: 13px; border-radius: 2px; background: #d8dbe0; }
.mini:checked { background: #b9bdc4; }
.mini:checked::before { content: ""; position: absolute; inset: 2px; background: #fff; clip-path: polygon(0 50%, 18% 34%, 40% 58%, 84% 6%, 100% 22%, 42% 94%); }

.totals { display: grid; grid-template-columns: 106px 66px 130px 71px; row-gap: 4px; align-content: start; font-weight: bold; line-height: 18px; }
.totals .box { height: 23px; }
.totals .end { text-align: right; line-height: 21px; }
.totals .end + .box { margin-left: 5px; width: 66px; }
.totals .area { grid-column: 2 / 5; width: 257px; height: 93px; resize: both; }

/* tick boxes drawn with a bevel */
.tag { appearance: none; flex: none; position: relative; width: 22px; height: 22px; border: 3px solid; border-color: #a4a4a4 #747474 #6c6c6c #a4a4a4; background: #fff; }
.tag:checked::before { content: ""; position: absolute; inset: -3px -3px -1px -1px; background: #000; clip-path: polygon(4% 48%, 26% 38%, 40% 56%, 86% 2%, 100% 0, 88% 24%, 48% 90%, 32% 90%); }

/* grid search bar */
.gridbar { display: flex; gap: 2px; margin-top: 15px; padding-left: 164px; }
.basic { width: 90px; justify-content: flex-end; }
.by { display: flex; align-items: center; gap: 5px; height: 18px; padding: 0 9px 0 4px; font-size: 14px; }
.by svg { width: 16px; height: 16px; }
.find { display: flex; flex-direction: column; margin-top: -6px; }
.find label { font-size: 13px; font-style: italic; line-height: 14px; }
.find input { width: 298px; height: 23px; padding: 0 3px; border: 1px solid #333; background: #fbf8c4; font-size: 15px; }
.find input::placeholder { color: #b3b3a4; }

/* data grid */
.grid { flex: 1; min-height: 0; display: flex; margin: 9px 16px 0 0; border: 1px solid #8b8b8b; border-bottom: 0; background: #fff; }
.sheet { flex: 1; min-width: 0; display: flex; flex-direction: column; }
.data { width: 100%; table-layout: fixed; border-collapse: collapse; line-height: 16px; }
.data th, .data td { padding: 0 3px 0 4px; overflow: hidden; white-space: nowrap; text-align: center; font-weight: normal; border-right: 1px solid #dcdcdc; }
.data th:last-child, .data td:last-child { border-right: 0; }
.data th:nth-child(6), .data td:nth-child(6), .data td:nth-child(2), .data td:nth-child(4) { text-align: left; padding-left: 5px; }
.data td:nth-child(3), .data th:nth-child(10), .data td:nth-child(10), .data th:nth-child(11), .data td:nth-child(11) { text-align: right; padding-right: 4px; }
.data td:first-child { padding: 0 0 0 2px; }
.c-tag { width: 44px; }
.c-id { width: 50px; }
.c-name { width: 138px; }
.c-class { width: 68px; }
.c-prog { width: 103px; }
.c-avg { width: 67px; }
.c-gpa { width: 68px; }
.c-rank { width: 44px; }
.head th { height: 25px; background: linear-gradient(#fff 40%, #eceef1); border-bottom: 1px solid #cfcfcf; }
.head th.sorted { position: relative; background: linear-gradient(#fff, #dcebf8); border-right-color: #b5d3ec; }
.sorted::before { content: ""; position: absolute; top: 0; left: 50%; border: 4px solid transparent; border-top-color: #8ab4d2; border-bottom: 0; }
.view-port { flex: 1; overflow: hidden; }
.rows { margin-top: -12px; }
.rows td { height: 23px; }
.rows tr:nth-child(3n+1) td { height: 24px; }
.rows tr:nth-child(odd) { background: #e0e0e0; }
.rows tr.on { background: #868686; color: #fff; }
.rows .tag { display: block; width: 23px; height: 23px; margin: 0 auto; }
.scroll { flex: 0 0 21px; display: flex; flex-direction: column; align-items: center; background: #fcfcfc; }
.up { margin-top: 7px; border: 6px solid transparent; border-top: 0; border-bottom: 10px solid #8b8b8b; }
.thumb { width: 12px; height: 93px; margin-top: 196px; border-radius: 6px; background: #8b8b8b; }
```
